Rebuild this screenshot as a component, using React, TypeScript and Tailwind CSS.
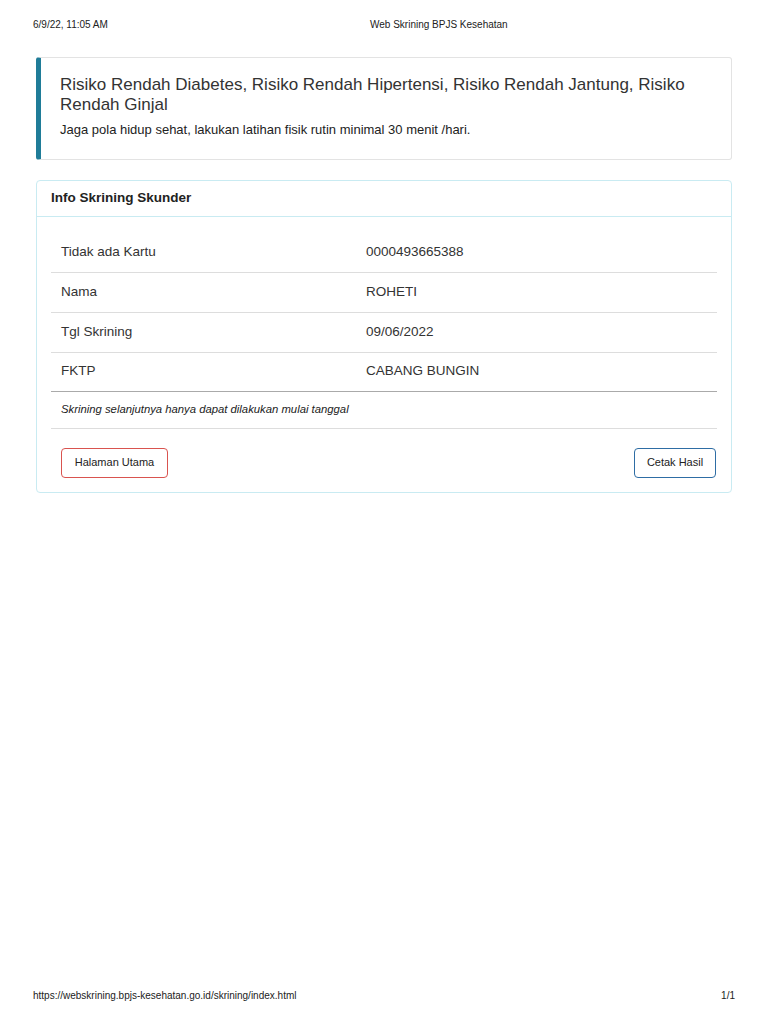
const rows: [string, string][] = [
  ["Tidak ada Kartu", "0000493665388"],
  ["Nama", "ROHETI"],
  ["Tgl Skrining", "09/06/2022"],
  ["FKTP", "CABANG BUNGIN"],
];

export default function App() {
  return (
    <div
      className="relative w-[768px] h-[1024px] bg-white text-[#333]"
      style={{ fontFamily: '"Liberation Sans", Arial, sans-serif' }}
    >
      <div className="flex pt-[19px] px-[33px] text-[10px] text-[#222] leading-[12px]">
        <span className="w-[337px]">6/9/22, 11:05 AM</span>
        <span>Web Skrining BPJS Kesehatan</span>
      </div>

      <div className="mx-[36px] mt-[26px] flex flex-col gap-[20px]">
        <div className="h-[103px] rounded-[3px] border border-[#e3e3e3] border-l-[5px] border-l-[#1f7c98] pl-[19px] pr-[20px] pt-[17px]">
          <h4 className="text-[17px] leading-[20px] text-[#333]">
            Risiko Rendah Diabetes, Risiko Rendah Hipertensi, Risiko Rendah Jantung, Risiko Rendah Ginjal
          </h4>
          <p className="mt-[7px] text-[13px] leading-[16px] text-[#222]">
            Jaga pola hidup sehat, lakukan latihan fisik rutin minimal 30 menit /hari.
          </p>
        </div>

        <div className="h-[313px] rounded-[4px] border border-[#c9ebf2]">
          <div className="h-[36px] border-b border-[#c9ebf2] px-[14px] pt-[9px] text-[13.5px] font-bold leading-[16px] text-[#222]">
            Info Skrining Skunder
          </div>
          <div className="px-[14px] pt-[15px]">
            <table className="w-full text-[13.5px] text-[#333]">
              <tbody>
                {rows.map(([k, v], i) => (
                  <tr
                    key={k}
                    className={
                      i === rows.length - 1
                        ? "h-[39px] border-b border-[#aaa]"
                        : "h-[40px] border-b border-[#ddd]"
                    }
                  >
                    <td className="w-[315px] pl-[10px] align-middle">{k}</td>
                    <td className="align-middle">{v}</td>
                  </tr>
                ))}
                <tr className="h-[37px] border-b border-[#ddd]">
                  <td colSpan={2} className="pl-[10px] text-[11.3px] italic text-[#222] align-middle">
                    Skrining selanjutnya hanya dapat dilakukan mulai tanggal
                  </td>
                </tr>
              </tbody>
            </table>
            <div className="mt-[19px] flex justify-between pl-[10px] pr-[1px]">
              <button className="h-[30px] w-[107px] rounded-[4px] border border-[#d9534f] bg-white text-[11px] text-[#222]">
                Halaman Utama
              </button>
              <button className="h-[30px] w-[82px] rounded-[4px] border border-[#2e6da4] bg-white text-[11px] text-[#222]">
                Cetak Hasil
              </button>
            </div>
          </div>
        </div>
      </div>

      <div className="absolute bottom-[22px] left-0 right-0 flex justify-between px-[33px] text-[10px] text-[#222] leading-[12px]">
        <span>https://webskrining.bpjs-kesehatan.go.id/skrining/index.html</span>
        <span>1/1</span>
      </div>
    </div>
  );
}
